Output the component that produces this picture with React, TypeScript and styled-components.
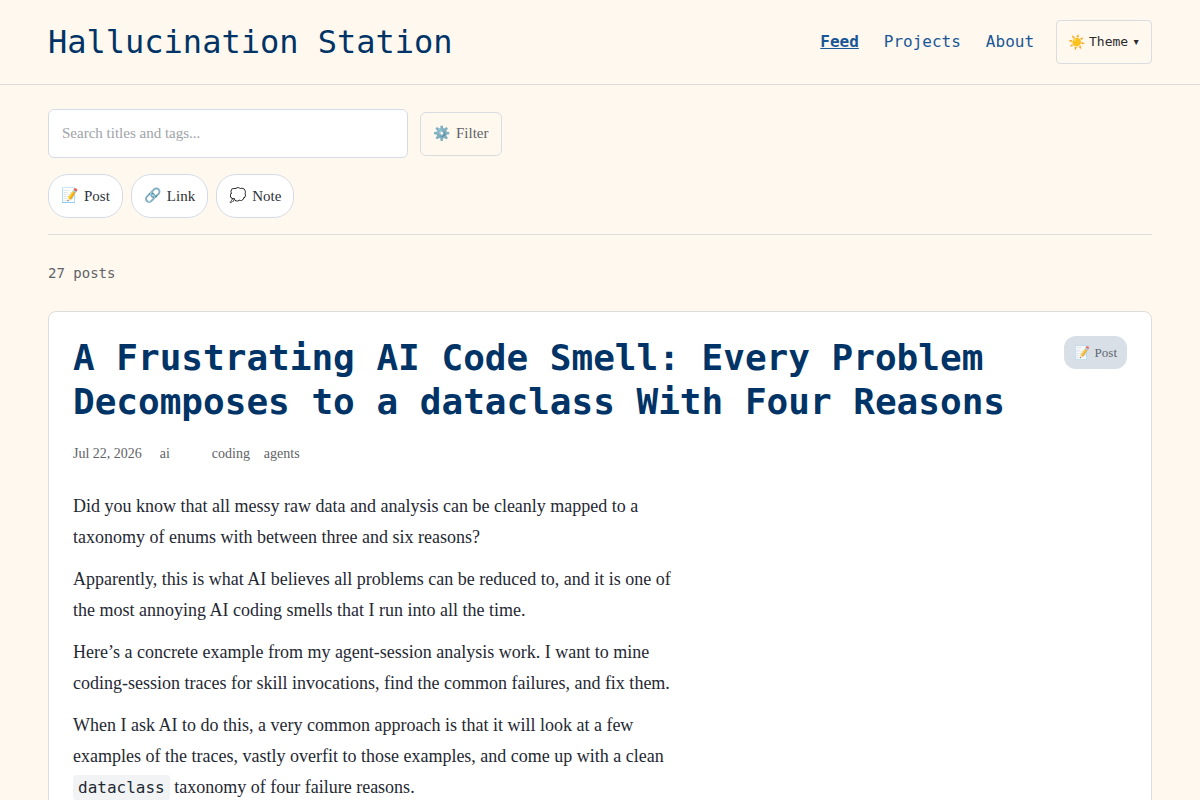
import React from "react";
import styled, { createGlobalStyle } from "styled-components";

const mono = `"DejaVu Sans Mono", monospace`;
const serif = `"Liberation Serif", serif`;

const GlobalStyle = createGlobalStyle`
  *, *::before, *::after { box-sizing: border-box; }
  body {
    margin: 0;
    background: #fff8ef;
    color: #1f2933;
    font-family: ${serif};
    font-size: 18px;
  }
  button, input { font: inherit; color: inherit; }
`;

const Header = styled.header`
  display: flex;
  align-items: center;
  justify-content: space-between;
  padding: 20px 48px;
  border-bottom: 1px solid #dddcdc;
`;

const SiteTitle = styled.a`
  color: #003366;
  font: 32px/41px ${mono};
  text-decoration: none;
`;

const HeaderSide = styled.div`
  display: flex;
  align-items: center;
  gap: 22px;
`;

const Nav = styled.nav`
  display: flex;
  gap: 25px;
`;

const NavLink = styled.a<{ $active?: boolean }>`
  color: #1a5796;
  font-family: ${mono};
  font-size: 16px;
  line-height: 44px;
  font-weight: ${(p) => (p.$active ? 700 : 400)};
  text-decoration: ${(p) => (p.$active ? "underline" : "none")};
`;

const Button = styled.button`
  display: inline-flex;
  align-items: center;
  height: 44px;
  padding: 0 12px;
  border: 1px solid #d9dce1;
  border-radius: 6px;
  background: transparent;
  cursor: pointer;
`;

const ThemeButton = styled(Button)`
  gap: 4px;
  padding: 0 11px;
  border-radius: 4px;
  color: #2b2b2b;
  font-family: ${mono};
  font-size: 13px;
  line-height: 18px;
`;

const ButtonIcon = styled.span`
  font-size: 14px;
  line-height: 18px;
`;

const FilterButton = styled(Button)`
  gap: 6px;
  color: #5f6368;
  font-size: 15px;
`;

const Chip = styled(Button)`
  gap: 6px;
  border-color: #d5dbe6;
  border-radius: 20px;
  background: #ffffff;
  color: #2c3138;
  font-size: 15px;
`;

const Main = styled.main`
  padding: 24px 48px;
`;

const Controls = styled.section`
  display: flex;
  flex-direction: column;
  gap: 16px;
  padding-bottom: 16px;
  border-bottom: 1px solid #dddcdc;
`;

const SearchRow = styled.div`
  display: flex;
  align-items: center;
  gap: 12px;
`;

const SearchInput = styled.input`
  width: 100%;
  max-width: 360px;
  height: 49px;
  padding: 0 13px;
  border: 1px solid #d5dbe6;
  border-radius: 6px;
  background: #ffffff;
  font-size: 15px;

  &::placeholder { color: #9ea3a8; opacity: 1; }
`;

const ChipRow = styled.div`
  display: flex;
  flex-wrap: wrap;
  gap: 8px;
`;

const Count = styled.p`
  margin: 26px 0;
  color: #5f6368;
  font: 14px/24px ${mono};
`;

const Card = styled.article`
  padding: 24px;
  border: 1px solid #dddcdc;
  border-radius: 8px;
  background: #ffffff;
`;

const CardHead = styled.div`
  display: flex;
  align-items: flex-start;
  justify-content: space-between;
  gap: 16px;
`;

const PostTitle = styled.h2`
  margin: 0;
  color: #003366;
  font: 700 36px/44px ${mono};
`;

const Badge = styled.span`
  display: inline-flex;
  flex: none;
  align-items: center;
  gap: 5px;
  height: 33px;
  padding: 0 10px;
  border-radius: 12px;
  background: #d8dfe6;
  color: #5f6670;
  font-size: 13px;
  line-height: 19px;
`;

const BadgeIcon = styled.span`
  opacity: 0.8;
`;

const Meta = styled.div`
  display: flex;
  align-items: center;
  gap: 18px;
  margin: 8px 0 15px;
  color: #5f6368;
  font-size: 14px;
  line-height: 44px;
`;

const Tags = styled.div`
  display: flex;
  gap: 8px;
`;

const Tag = styled.a`
  min-width: 44px;
  color: inherit;
  text-decoration: none;
`;

const Body = styled.div`
  display: flex;
  flex-direction: column;
  gap: 11px;
  max-width: 612px;
  color: #1f2933;
  font-size: 18px;
  line-height: 31px;
`;

const Paragraph = styled.p`
  margin: 0;
`;

const Code = styled.code`
  padding: 3px 5px;
  border-radius: 3px;
  background: #f2f3f4;
  font-family: ${mono};
  font-size: 16px;
`;

const kinds = [
  { icon: "📝", label: "Post" },
  { icon: "🔗", label: "Link" },
  { icon: "💭", label: "Note" },
];

const tags = ["ai", "coding", "agents"];

export default function App() {
  return (
    <>
      <GlobalStyle />
      <Header>
        <SiteTitle href="#">Hallucination Station</SiteTitle>
        <HeaderSide>
          <Nav>
            <NavLink href="#feed" $active aria-current="page">Feed</NavLink>
            <NavLink href="#projects">Projects</NavLink>
            <NavLink href="#about">About</NavLink>
          </Nav>
          <ThemeButton type="button">
            <ButtonIcon>☀️</ButtonIcon>
            <span>Theme</span>
            <span>▾</span>
          </ThemeButton>
        </HeaderSide>
      </Header>
      <Main>
        <Controls>
          <SearchRow>
            <SearchInput type="search" placeholder="Search titles and tags..." aria-label="Search titles and tags" />
            <FilterButton type="button">
              <ButtonIcon>⚙️</ButtonIcon>
              <span>Filter</span>
            </FilterButton>
          </SearchRow>
          <ChipRow>
            {kinds.map((kind) => (
              <Chip type="button" key={kind.label}>
                <ButtonIcon>{kind.icon}</ButtonIcon>
                <span>{kind.label}</span>
              </Chip>
            ))}
          </ChipRow>
        </Controls>
        <Count>27 posts</Count>
        <Card>
          <CardHead>
            <PostTitle>A Frustrating AI Code Smell: Every Problem Decomposes to a dataclass With Four Reasons</PostTitle>
            <Badge>
              <BadgeIcon>📝</BadgeIcon>
              <span>Post</span>
            </Badge>
          </CardHead>
          <Meta>
            <time dateTime="2026-07-22">Jul 22, 2026</time>
            <Tags>
              {tags.map((tag) => (
                <Tag href={`#${tag}`} key={tag}>{tag}</Tag>
              ))}
            </Tags>
          </Meta>
          <Body>
            <Paragraph>
              Did you know that all messy raw data and analysis can be cleanly mapped to a taxonomy of enums with
              between three and six reasons?
            </Paragraph>
            <Paragraph>
              Apparently, this is what AI believes all problems can be reduced to, and it is one of the most annoying
              AI coding smells that I run into all the time.
            </Paragraph>
            <Paragraph>
              Here’s a concrete example from my agent-session analysis work. I want to mine coding-session traces for
              skill invocations, find the common failures, and fix them.
            </Paragraph>
            <Paragraph>
              When I ask AI to do this, a very common approach is that it will look at a few examples of the traces,
              vastly overfit to those examples, and come up with a clean <Code>dataclass</Code> taxonomy of four
              failure reasons.
            </Paragraph>
          </Body>
        </Card>
      </Main>
    </>
  );
}
